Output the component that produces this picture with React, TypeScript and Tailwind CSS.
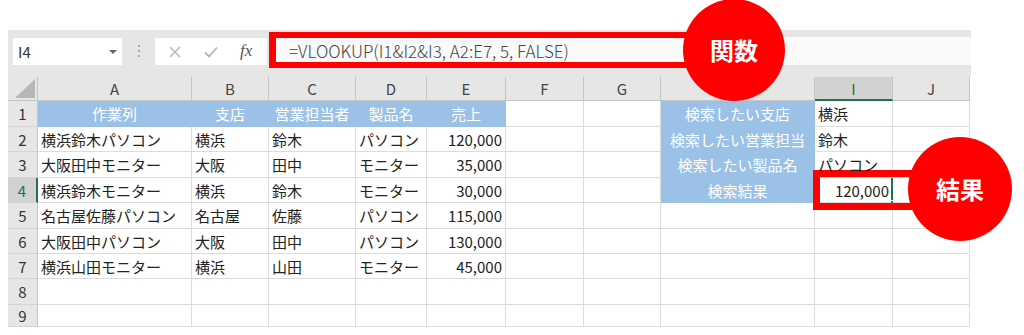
const COLS = [30, 154, 77, 87, 71, 79, 78, 77, 154, 78, 77];
const LETTERS = ["A", "B", "C", "D", "E", "F", "G", "H", "I", "J"];
const ROW_H = [26, 25, 26, 25, 26, 25, 25, 26, 22];

type Cell = { t?: string; blue?: boolean; align?: "l" | "c" | "r" };

const data: Cell[][] = [
  [
    { t: "作業列", blue: true, align: "c" },
    { t: "支店", blue: true, align: "c" },
    { t: "営業担当者", blue: true, align: "c" },
    { t: "製品名", blue: true, align: "c" },
    { t: "売上", blue: true, align: "c" },
    {},
    {},
    { t: "検索したい支店", blue: true, align: "c" },
    { t: "横浜" },
    {},
  ],
  [
    { t: "横浜鈴木パソコン" },
    { t: "横浜" },
    { t: "鈴木" },
    { t: "パソコン" },
    { t: "120,000", align: "r" },
    {},
    {},
    { t: "検索したい営業担当", blue: true, align: "c" },
    { t: "鈴木" },
    {},
  ],
  [
    { t: "大阪田中モニター" },
    { t: "大阪" },
    { t: "田中" },
    { t: "モニター" },
    { t: "35,000", align: "r" },
    {},
    {},
    { t: "検索したい製品名", blue: true, align: "c" },
    { t: "パソコン" },
    {},
  ],
  [
    { t: "横浜鈴木モニター" },
    { t: "横浜" },
    { t: "鈴木" },
    { t: "モニター" },
    { t: "30,000", align: "r" },
    {},
    {},
    { t: "検索結果", blue: true, align: "c" },
    { t: "120,000", align: "r" },
    {},
  ],
  [
    { t: "名古屋佐藤パソコン" },
    { t: "名古屋" },
    { t: "佐藤" },
    { t: "パソコン" },
    { t: "115,000", align: "r" },
  ],
  [
    { t: "大阪田中パソコン" },
    { t: "大阪" },
    { t: "田中" },
    { t: "パソコン" },
    { t: "130,000", align: "r" },
  ],
  [
    { t: "横浜山田モニター" },
    { t: "横浜" },
    { t: "山田" },
    { t: "モニター" },
    { t: "45,000", align: "r" },
  ],
  [],
  [],
];

const font = "font-['Noto_Sans_CJK_JP','Noto_Sans',sans-serif]";

const Toolbar = () => (
  <div className="ml-2 w-[963px] h-[47px] bg-[#e6e6e6] flex pt-[7px]">
    <div className="ml-[5px] mt-px w-[109px] h-[27px] bg-white flex items-center pl-[5px] pr-[5px] text-[15px] text-[#333]">
      <span className="flex-1">I4</span>
      <span className="w-0 h-0 border-l-[4px] border-r-[4px] border-t-[4px] border-l-transparent border-r-transparent border-t-[#666]" />
    </div>
    <div className="w-[33px] flex flex-col items-center justify-center gap-[3px] h-[28px]">
      <span className="w-[2px] h-[2px] bg-[#aaa]" />
      <span className="w-[2px] h-[2px] bg-[#aaa]" />
      <span className="w-[2px] h-[2px] bg-[#aaa]" />
    </div>
    <div className="mt-px w-[112px] h-[27px] bg-white flex items-center pl-[13px] gap-[21px]">
      <svg width="14" height="14" viewBox="0 0 14 14" className="stroke-[#b4b4b4]" strokeWidth="1.4" fill="none">
        <path d="M2 2L12 12M12 2L2 12" />
      </svg>
      <svg width="16" height="14" viewBox="0 0 16 14" className="stroke-[#b4b4b4]" strokeWidth="1.8" fill="none">
        <path d="M2 7.5L6 11.5L14 2.5" />
      </svg>
      <span className="font-['Liberation_Serif',serif] italic text-[17px] text-[#555] leading-none -mt-[2px]">
        fx
      </span>
    </div>
    <div className="ml-[2px] flex-1 h-[28px] bg-[#fafafa]" />
  </div>
);

const Grid = () => (
  <div className="ml-2 flex flex-col">
    <div className="flex h-[24px]">
      <div className="w-[30px] h-full bg-[#e6e6e6] border-r border-b border-[#c4c4c4] relative shrink-0">
        <svg className="absolute right-[2px] bottom-[2px]" width="20" height="19" viewBox="0 0 20 19">
          <path d="M20 0L20 19L0 19Z" fill="#b7b7b7" />
        </svg>
      </div>
      {LETTERS.map((l, i) => {
        const sel = l === "I";
        return (
          <div
            key={l}
            style={{ width: COLS[i + 1] }}
            className={`h-full shrink-0 flex items-center justify-center text-[15px] border-r ${
              sel
                ? "bg-[#d2d2d2] text-[#217346] border-b-2 border-b-[#217346] border-r-[#c4c4c4]"
                : "bg-[#e6e6e6] text-[#444] border-b border-[#c4c4c4]"
            }`}
          >
            {l}
          </div>
        );
      })}
    </div>
    {ROW_H.map((h, r) => {
      const row = data[r] || [];
      const sel = r === 3;
      return (
        <div key={r} className="flex" style={{ height: h }}>
          <div
            className={`w-[30px] h-full shrink-0 flex items-center justify-center text-[15px] border-b border-b-[#d4d4d4] ${
              sel
                ? "bg-[#d2d2d2] text-[#217346] border-r-2 border-r-[#217346]"
                : "bg-[#e6e6e6] text-[#333] border-r border-r-[#c4c4c4]"
            }`}
          >
            {r + 1}
          </div>
          {LETTERS.map((l, c) => {
            const cell = row[c] || {};
            const align =
              cell.align === "r"
                ? "justify-end pr-[3px]"
                : cell.align === "c"
                ? "justify-center"
                : "justify-start pl-[3px]";
            const color = cell.blue
              ? "bg-[#9bc2e6] text-white border-[#9bc2e6]"
              : "bg-white text-[#222] border-[#dcdcdc]";
            return (
              <div
                key={l}
                style={{ width: COLS[c + 1] }}
                className={`h-full shrink-0 flex items-center whitespace-nowrap overflow-visible text-[15px] border-r border-b relative ${align} ${color}`}
              >
                {cell.t && <span className="relative z-[1]">{cell.t}</span>}
                {sel && l === "I" && (
                  <>
                    <span className="absolute -right-px top-0 bottom-0 w-[2px] bg-[#217346]" />
                    <span className="absolute -right-[3px] -bottom-[3px] w-[5px] h-[5px] bg-[#217346] border border-white" />
                  </>
                )}
              </div>
            );
          })}
        </div>
      );
    })}
  </div>
);

export default function App() {
  return (
    <div className={`w-[1024px] h-[335px] bg-white relative overflow-hidden ${font} leading-none`}>
      <div className="h-[30px]" />
      <Toolbar />
      <Grid />

      {/* annotations */}
      <div className="absolute left-[269px] top-[32px] w-[440px] h-[36px] border-[7px] border-t-[6px] border-b-[6px] border-[#f00] flex items-center pl-[13px] text-[17px] text-[#444] font-light bg-[#fafafa] font-['Noto_Sans_CJK_JP','Noto_Sans',sans-serif]">
        =VLOOKUP(I1&amp;I2&amp;I3, A2:E7, 5, FALSE)
      </div>
      <div className="absolute left-[683px] top-[-1px] w-[102px] h-[102px] rounded-full bg-[#f00] flex items-center justify-center text-white font-bold text-[24px]">
        関数
      </div>
      <div className="absolute left-[813px] top-[170px] w-[110px] h-[40px] border-[7px] border-[#f00]" />
      <div className="absolute left-[908px] top-[137px] w-[104px] h-[104px] rounded-full bg-[#f00] flex items-center justify-center text-white font-bold text-[24px]">
        結果
      </div>
    </div>
  );
}
